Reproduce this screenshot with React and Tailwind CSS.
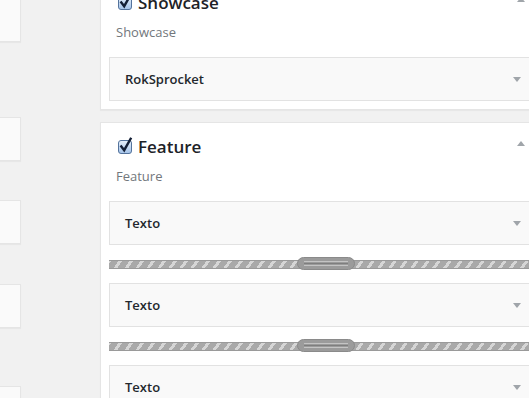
import React from "react";

function Checkbox() {
  return (
    <svg width="17" height="17" viewBox="0 0 17 17" className="shrink-0">
      <defs>
        <linearGradient id="cbg" x1="0" y1="0" x2="0" y2="1">
          <stop offset="0" stopColor="#e6f0fb" />
          <stop offset="1" stopColor="#a3c2e8" />
        </linearGradient>
      </defs>
      <rect x="1.5" y="3.5" width="13" height="13" rx="2.5" fill="url(#cbg)" stroke="#54739c" />
      <path d="M4.3 9.4 L7.2 13.2 L13.6 1.8" fill="none" stroke="#131f36" strokeWidth="2.4" strokeLinecap="square" strokeLinejoin="miter" />
    </svg>
  );
}

function Down() {
  return (
    <svg width="8" height="5" viewBox="0 0 8 5" className="shrink-0">
      <path d="M0 0 H8 L4 5 Z" fill="#a0a5aa" />
    </svg>
  );
}

function Up() {
  return (
    <svg width="8" height="5" viewBox="0 0 8 5" className="shrink-0">
      <path d="M0 5 H8 L4 0 Z" fill="#a0a5aa" />
    </svg>
  );
}

function Inner({ label }) {
  return (
    <div className="h-[44px] border border-[#e2e2e2] bg-[#f9f9f9] flex items-center pl-[15px] pr-[20px]">
      <span className="flex-1 text-[13px] leading-[20px] font-semibold text-[#23282d]">{label}</span>
      <Down />
    </div>
  );
}

function Slider() {
  return (
    <div className="relative h-[10px] flex items-center">
      <div className="w-full h-[9px] border-y border-[#9a9a9a] bg-[repeating-linear-gradient(-55deg,#a9a9a9_0px,#a9a9a9_6px,#d6d6d6_6px,#d6d6d6_9px)]" />
      <div className="absolute left-[188px] top-[-2px] w-[58px] h-[13px] rounded-full bg-[#9b9b9b] border border-[#8a8a8a] flex flex-col justify-center px-[6px] gap-[1px]">
        <div className="h-[1px] bg-[#c4c4c4]" />
        <div className="h-[1px] bg-[#7e7e7e]" />
        <div className="h-[1px] bg-[#c4c4c4]" />
      </div>
    </div>
  );
}

function Panel({ title, children, className }) {
  return (
    <div className={"bg-white border border-[#e5e5e5] shadow-[0_1px_1px_rgba(0,0,0,0.04)] pt-[12px] pb-[8px] px-[8px] " + className}>
      <div className="h-[24px] flex items-center pl-[8px] pr-[17px]">
        <div className="mt-[-3px]"><Checkbox /></div>
        <span className="ml-[4px] flex-1 text-[17px] leading-[24px] font-semibold text-[#1d2227]">{title}</span>
        <div className="self-start mt-[6px]"><Up /></div>
      </div>
      <div className="mt-[7px] pl-[7px] text-[13px] leading-[20px] text-[#72777c]">{title}</div>
      <div className="mt-[15px] flex flex-col">{children}</div>
    </div>
  );
}

function LeftBox({ className }) {
  return <div className={"w-[21px] h-[44px] bg-[#fafafa] border-y border-r border-[#e5e5e5] shadow-[0_1px_1px_rgba(0,0,0,0.04)] " + className} />;
}

export default function App() {
  return (
    <div className="w-[529px] h-[398px] overflow-hidden bg-[#f1f1f1] font-['Open_Sans',sans-serif]">
      <div className="flex w-[560px]">
        <div className="w-[100px] shrink-0 flex flex-col">
          <LeftBox className="mt-[-2px]" />
          <LeftBox className="mt-[75px]" />
          <LeftBox className="mt-[39px]" />
          <LeftBox className="mt-[40px]" />
          <LeftBox className="mt-[58px]" />
        </div>
        <div className="w-[451px] shrink-0 flex flex-col">
          <Panel title="Showcase" className="mt-[-22px]">
            <Inner label="RokSprocket" />
          </Panel>
          <Panel title="Feature" className="mt-[12px]">
            <Inner label="Texto" />
            <div className="my-[14px]"><Slider /></div>
            <Inner label="Texto" />
            <div className="my-[14px]"><Slider /></div>
            <Inner label="Texto" />
          </Panel>
        </div>
      </div>
    </div>
  );
}
